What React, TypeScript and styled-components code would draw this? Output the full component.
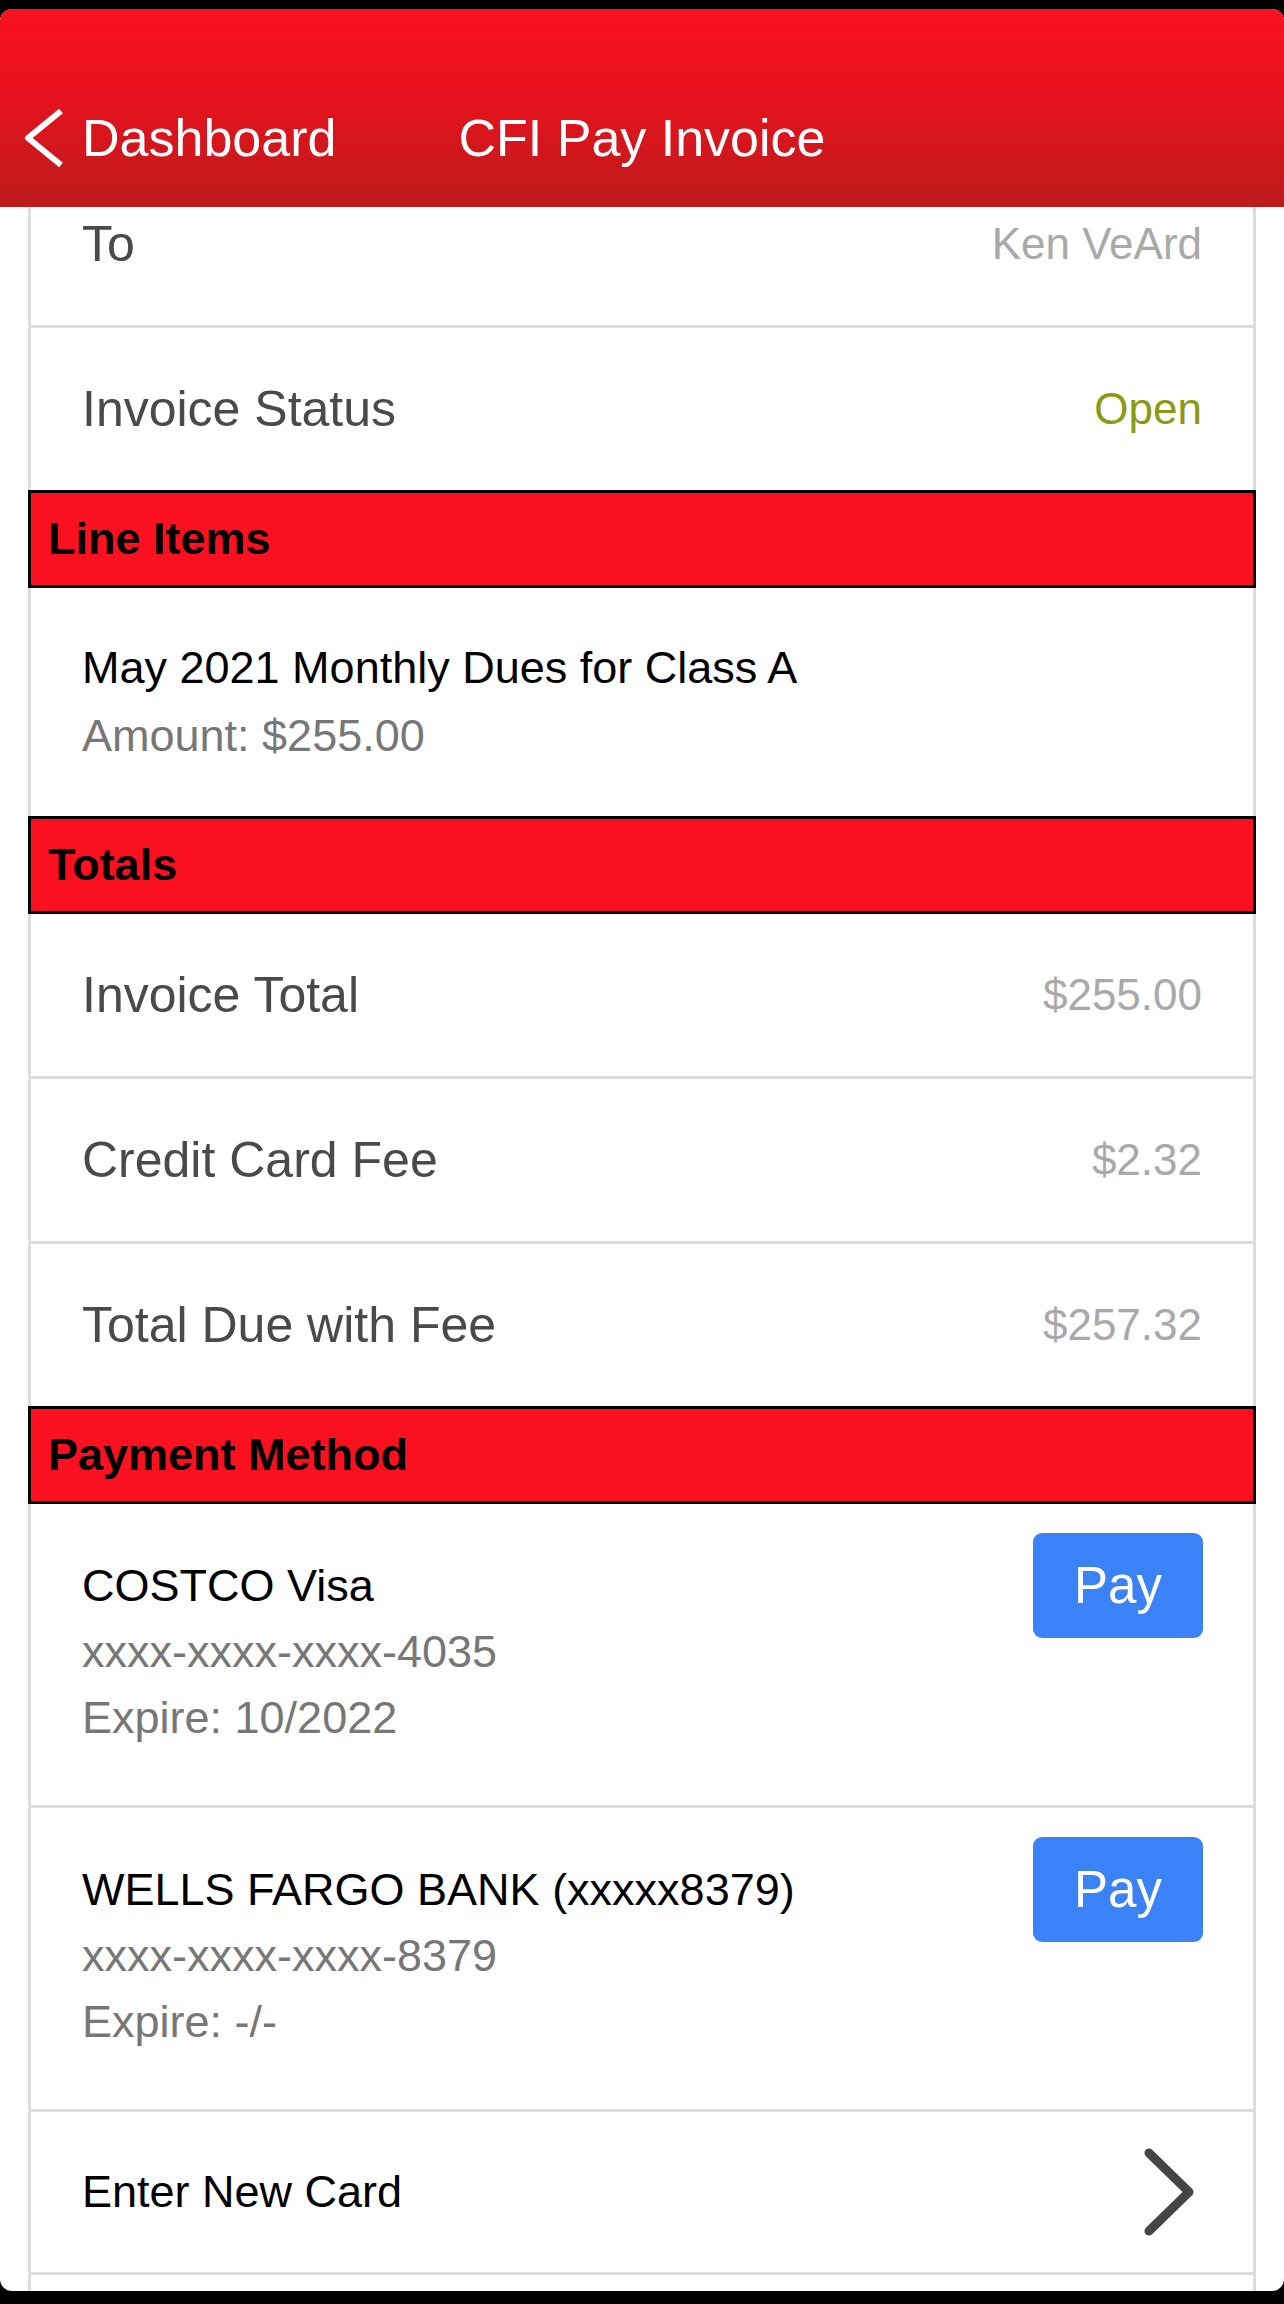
import React from "react";
import styled, { createGlobalStyle } from "styled-components";

const GlobalStyle = createGlobalStyle`
  *, *::before, *::after {
    box-sizing: border-box;
  }

  html,
  body {
    margin: 0;
    background: #000;
    font-family: "Liberation Sans", Arial, sans-serif;
  }
`;

interface Detail {
  label: string;
  value: string;
  color?: string;
}

interface Card {
  name: string;
  number: string;
  expire: string;
}

const invoiceDetails: Detail[] = [
  { label: "To", value: "Ken VeArd" },
  { label: "Invoice Status", value: "Open", color: "#889b12" },
];

const totals: Detail[] = [
  { label: "Invoice Total", value: "$255.00" },
  { label: "Credit Card Fee", value: "$2.32" },
  { label: "Total Due with Fee", value: "$257.32" },
];

const cards: Card[] = [
  { name: "COSTCO Visa", number: "xxxx-xxxx-xxxx-4035", expire: "10/2022" },
  {
    name: "WELLS FARGO BANK (xxxxx8379)",
    number: "xxxx-xxxx-xxxx-8379",
    expire: "-/-",
  },
];

const Screen = styled.div`
  margin-top: 9px;
  height: 2282px;
  background: #fff;
  border-radius: 12px;
  overflow: hidden;
  display: flex;
  flex-direction: column;
`;

const NavBar = styled.header`
  flex: none;
  height: 198px;
  padding: 81px 24px 21px;
  background: linear-gradient(180deg, #f9111f 0%, #e3131d 50%, #bb1b1b 100%);
  display: grid;
  grid-template-columns: 1fr auto 1fr;
  align-items: center;
  color: #fff;
`;

const BackButton = styled.div`
  display: flex;
  align-items: center;
  gap: 18px;
  font-size: 52px;
  line-height: 96px;
`;

const NavTitle = styled.div`
  font-size: 52px;
  line-height: 96px;
`;

const ScrollArea = styled.main`
  flex: 1;
  overflow: hidden;
  padding: 0 28px;
`;

const List = styled.div`
  margin-top: -44px;
  min-height: 2200px;
  border-left: 3px solid #dcdcdc;
  border-right: 3px solid #dcdcdc;
`;

const Row = styled.div`
  display: flex;
  align-items: center;
  justify-content: space-between;
  min-height: 165px;
  padding: 0 51px;
  border-bottom: 3px solid #dcdcdc;
`;

const Label = styled.span`
  font-size: 50px;
  color: #4a4a4a;
`;

const Value = styled.span<{ $color?: string }>`
  font-size: 44px;
  color: ${(p) => p.$color || "#a9a9a9"};
`;

const SectionHeader = styled.div`
  margin: -3px -3px 0;
  height: 98px;
  padding-left: 17px;
  display: flex;
  align-items: center;
  background: #f9111f;
  border: 3px solid #000;
  font-size: 45px;
  font-weight: 700;
  color: #000;
`;

const StackRow = styled.div`
  min-height: 231px;
  padding: 46px 51px;
  border-bottom: 3px solid #dcdcdc;
`;

const Line = styled.div<{ $muted?: boolean; $height?: number }>`
  font-size: 45px;
  line-height: ${(p) => p.$height || 68}px;
  color: ${(p) => (p.$muted ? "#777" : "#000")};
  white-space: nowrap;
`;

const CardRow = styled.div`
  display: flex;
  align-items: flex-start;
  justify-content: space-between;
  min-height: 304px;
  padding: 29px 50px 0 51px;
  border-bottom: 3px solid #dcdcdc;
`;

const CardInfo = styled.div`
  padding-top: 20px;
`;

const PayButton = styled.button`
  width: 170px;
  height: 105px;
  border: none;
  border-radius: 9px;
  background: #3b82f6;
  color: #fff;
  font-family: inherit;
  font-size: 51px;
  padding: 0;
`;

const LinkRow = styled(Row)`
  min-height: 163px;
  padding-right: 58px;
`;

const LinkLabel = styled.span`
  font-size: 45px;
  color: #000;
`;

const BackChevron = () => (
  <svg width="40" height="64" viewBox="0 0 40 64" fill="none">
    <path d="M37 5 L4 32 L37 59" stroke="#fff" strokeWidth="6" strokeLinejoin="round" />
  </svg>
);

const ForwardChevron = () => (
  <svg width="52" height="90" viewBox="0 0 52 90" fill="none">
    <path
      d="M6 6 L46 45 L6 84"
      stroke="#444"
      strokeWidth="9"
      strokeLinecap="round"
      strokeLinejoin="round"
    />
  </svg>
);

const App: React.FC = () => {
  return (
    <>
      <GlobalStyle />
      <Screen>
        <NavBar>
          <BackButton>
            <BackChevron />
            Dashboard
          </BackButton>
          <NavTitle>CFI Pay Invoice</NavTitle>
          <div />
        </NavBar>
        <ScrollArea>
          <List>
            {invoiceDetails.map((d) => (
              <Row key={d.label}>
                <Label>{d.label}</Label>
                <Value $color={d.color}>{d.value}</Value>
              </Row>
            ))}

            <SectionHeader>Line Items</SectionHeader>
            <StackRow>
              <Line>May 2021 Monthly Dues for Class A</Line>
              <Line $muted>Amount: $255.00</Line>
            </StackRow>

            <SectionHeader>Totals</SectionHeader>
            {totals.map((d) => (
              <Row key={d.label}>
                <Label>{d.label}</Label>
                <Value>{d.value}</Value>
              </Row>
            ))}

            <SectionHeader>Payment Method</SectionHeader>
            {cards.map((c) => (
              <CardRow key={c.number}>
                <CardInfo>
                  <Line $height={66}>{c.name}</Line>
                  <Line $muted $height={66}>
                    {c.number}
                  </Line>
                  <Line $muted $height={66}>
                    Expire: {c.expire}
                  </Line>
                </CardInfo>
                <PayButton>Pay</PayButton>
              </CardRow>
            ))}
            <LinkRow>
              <LinkLabel>Enter New Card</LinkLabel>
              <ForwardChevron />
            </LinkRow>
          </List>
        </ScrollArea>
      </Screen>
    </>
  );
};

export default App;
